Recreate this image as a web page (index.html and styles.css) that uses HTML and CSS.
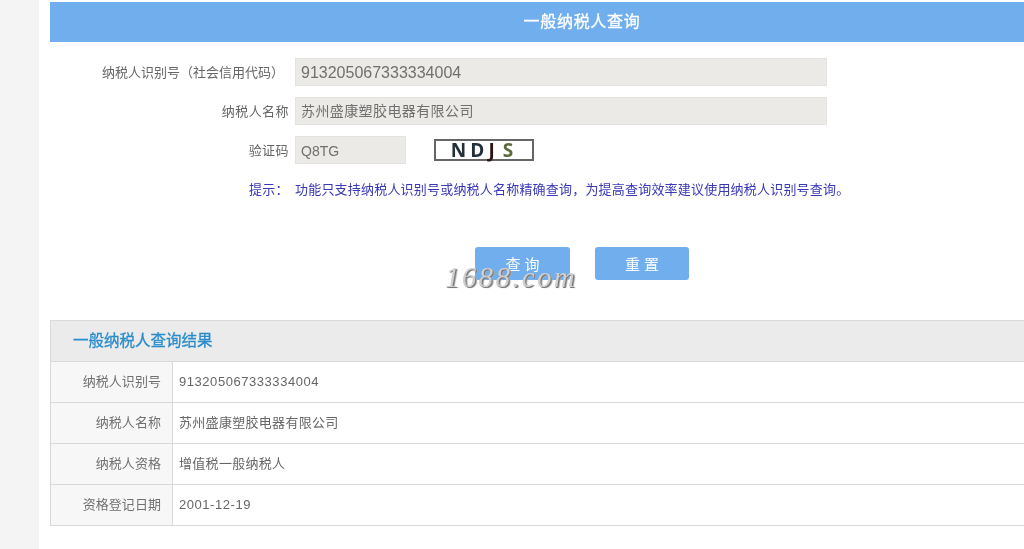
FILE: index.html
```html
<!DOCTYPE html>
<html lang="zh-CN">
<head>
<meta charset="utf-8">
<title>一般纳税人查询</title>
<link rel="stylesheet" href="styles.css">
</head>
<body>
<div class="page">
  <aside class="gutter"></aside>
  <main class="content">
    <h1 class="banner">一般纳税人查询</h1>
    <form class="form">
      <div class="row">
        <label class="label label-wide">纳税人识别号（社会信用代码）</label>
        <div class="field field-long">913205067333334004</div>
      </div>
      <div class="row">
        <label class="label">纳税人名称</label>
        <div class="field field-long field-name">苏州盛康塑胶电器有限公司</div>
      </div>
      <div class="row">
        <label class="label">验证码</label>
        <div class="field field-code">Q8TG</div>
        <div class="captcha"><span>N</span><span>D</span><span class="c-j">J</span><span class="c-s">S</span></div>
      </div>
      <p class="tip"><span class="tip-head">提示：</span><span>功能只支持纳税人识别号或纳税人名称精确查询，为提高查询效率建议使用纳税人识别号查询。</span></p>
      <div class="actions">
        <button type="button" class="btn btn-query">查 询</button>
        <button type="button" class="btn btn-reset">重 置</button>
        <span class="watermark">1688.com</span>
      </div>
    </form>
    <section class="result">
      <h2 class="result-title">一般纳税人查询结果</h2>
      <div class="result-row"><div class="result-key">纳税人识别号</div><div class="result-val num">913205067333334004</div></div>
      <div class="result-row"><div class="result-key">纳税人名称</div><div class="result-val">苏州盛康塑胶电器有限公司</div></div>
      <div class="result-row"><div class="result-key">纳税人资格</div><div class="result-val">增值税一般纳税人</div></div>
      <div class="result-row"><div class="result-key">资格登记日期</div><div class="result-val num">2001-12-19</div></div>
    </section>
  </main>
</div>
</body>
</html>
```
FILE: styles.css
```css
* { box-sizing: border-box; }
html, body { margin: 0; height: 100%; overflow: hidden; background: #fff; }
body { font-family: "Liberation Sans", "Noto Sans CJK SC", sans-serif; color: #666; }
.page { display: flex; height: 549px; width: 1024px; filter: blur(0.45px); }
.gutter { flex: 0 0 39px; background: #f4f4f4; }
.content { flex: 1; padding: 2px 0 0 11px; min-width: 0; }
.banner {
  margin: 0; height: 40px; line-height: 39px; text-align: center;
  background: #71aeee; color: #fff; font-size: 16px; font-weight: 400;
  padding-left: 90px; letter-spacing: .7px; -webkit-text-stroke: .3px #fff;
}
.form { padding-top: 16px; height: 278px; }
.row { display: flex; align-items: center; height: 28px; margin-bottom: 11px; }
.label { flex: 0 0 239px; text-align: right; font-size: 13px; letter-spacing: .45px; color: #666; line-height: 26px; padding-top: 1px; }
.label-wide { padding: 2px 5px 0 0; letter-spacing: 0; }
.field {
  margin-left: 6px; height: 28px; line-height: 28px; padding-left: 5px;
  background: #ebeae6; border: 1px solid #e4e3df; font-size: 16px; color: #707070;
}
.field-long { width: 532px; }
.field-name { font-size: 14px; letter-spacing: .4px; line-height: 27px; }
.field-code { width: 111px; font-size: 14px; }
.captcha {
  margin-left: 28px; width: 100px; height: 22px; border: 2px solid #666; background: #fff;
  display: flex; justify-content: center; align-items: center; gap: 3px; padding-right: 3px;
  font: 700 19px/18px "Open Sans", sans-serif; color: #23303a; letter-spacing: 1px;
}
.c-j { color: #2a1512; margin-right: 4px; }
.c-s { color: #5b6b3c; }
.tip { display: flex; margin: 0 0 0 199px; padding-top: 6px; font-size: 13px; line-height: 18px; color: #3838b8; }
.tip-head { width: 46px; letter-spacing: .3px; }
.tip span:last-child { letter-spacing: .2px; }
.actions { position: relative; display: flex; gap: 25px; margin: 48px 0 0 425px; }
.btn { width: 95px; height: 33px; border: 0; border-radius: 3px; background: #71aeee; color: #fff; font-size: 15px; font-family: inherit; padding: 0; }
.btn-reset { width: 94px; }
.watermark {
  position: absolute; left: -30px; top: 17px;
  font: italic 400 29px/26px "Liberation Serif", serif; color: #cfcfcf; letter-spacing: 2.3px;
  text-shadow: 1px 1px 0 #777, 2px 1px 1px #aaa;
}
.result { border: 1px solid #d9d9d9; border-right: 0; }
.result-title {
  margin: 0; height: 40px; line-height: 39px; padding-left: 22px;
  background: #ebebeb; font-size: 15.5px; font-weight: 400; color: #2a8ccb;
  -webkit-text-stroke: .3px #2a8ccb;
}
.result-row { display: flex; height: 41px; border-top: 1px solid #d9d9d9; font-size: 13px; line-height: 39px; }
.result-key { flex: 0 0 122px; padding-right: 11px; text-align: right; background: #f7f7f7; border-right: 1px solid #d9d9d9; letter-spacing: .05px; color: #707070; }
.result-val { padding-left: 6px; color: #666; letter-spacing: .3px; }
.num { letter-spacing: .55px; }
```
